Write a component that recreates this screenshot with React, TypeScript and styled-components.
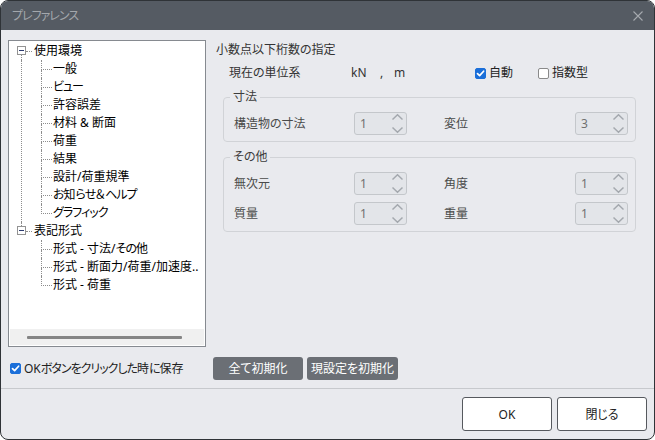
import * as React from "react";
import styled, { createGlobalStyle } from "styled-components";

const GlobalStyle = createGlobalStyle`
  html, body {
    margin: 0;
    padding: 0;
    background: #fff;
  }
  body {
    font-family: "Noto Sans", "Noto Sans CJK JP", sans-serif;
    font-size: 12px;
    font-feature-settings: "palt";
  }
  * {
    box-sizing: border-box;
  }
`;

const colors = {
  titleBar: "#555b63",
  titleText: "#a3a7ac",
  body: "#e9eaee",
  frame: "#2f3337",
  line: "#8d8d8d",
  text: "#222",
  label: "#4a4a4a",
  fieldBorder: "#d1d3d7",
  blue: "#1b6fd9",
  darkButton: "#6b6f75"
};

type TreeNode = { label: string; children: string[] };

const tree: TreeNode[] = [
  {
    label: "使用環境",
    children: [
      "一般",
      "ビュー",
      "許容誤差",
      "材料 & 断面",
      "荷重",
      "結果",
      "設計/荷重規準",
      "お知らせ＆ヘルプ",
      "グラフィック"
    ]
  },
  {
    label: "表記形式",
    children: ["形式 - 寸法/その他", "形式 - 断面力/荷重/加速度..", "形式 - 荷重"]
  }
];

// kana in the original UI font is narrower than in Noto, so tighten those runs
const KanaRun = styled.span`
  letter-spacing: -1px;
`;

const JP = ({ text }: { text: string }) => (
  <>
    {text.split(/([\u3040-\u30ff]+)/).map((part, i) =>
      /[\u3040-\u30ff]/.test(part) ? <KanaRun key={i}>{part}</KanaRun> : part
    )}
  </>
);

const Window = styled.div`
  width: 655px;
  height: 440px;
  border: 1px solid ${colors.frame};
  border-radius: 8px;
  overflow: hidden;
  background: ${colors.body};
  display: flex;
  flex-direction: column;
`;

const TitleBar = styled.div`
  height: 29px;
  flex: 0 0 auto;
  background: ${colors.titleBar};
  display: flex;
  align-items: center;
  justify-content: space-between;
  padding: 0 11px 0 11px;
`;

const Title = styled.div`
  color: ${colors.titleText};
  font-size: 12px;
  line-height: 16px;
  margin-top: 1px;
`;

const CloseIcon = styled.svg`
  display: block;
`;

const Body = styled.div`
  padding: 10px 7px 8px 7px;
  display: flex;
  flex-direction: column;
`;

const Upper = styled.div`
  display: flex;
  align-items: flex-start;
`;

const TreePanel = styled.div`
  width: 198px;
  height: 307px;
  flex: 0 0 auto;
  border: 1px solid #868a90;
  background: #fff;
  display: flex;
  flex-direction: column;
`;

const TreeItems = styled.div`
  flex: 1 1 auto;
  padding: 1px 0 0 8px;
  overflow: hidden;
`;

const ScrollTrack = styled.div`
  height: 16px;
  margin: 0 1px 1px 1px;
  background: #f0f0f0;
  display: flex;
  align-items: center;
  padding-left: 17px;
`;

const ScrollThumb = styled.div`
  width: 155px;
  height: 3px;
  border-radius: 1px;
  background: #858585;
`;

const Row = styled.div`
  height: 18px;
  display: flex;
  align-items: stretch;
  white-space: nowrap;
`;

const ExpandCol = styled.div`
  width: 9px;
  display: flex;
  flex-direction: column;
`;

const Segment = styled.div<{ $on: boolean; $grow?: boolean }>`
  margin-left: 4px;
  height: ${(p) => (p.$grow ? "auto" : "4px")};
  flex: ${(p) => (p.$grow ? "1 1 auto" : "0 0 auto")};
  border-left: 1px dotted ${(p) => (p.$on ? colors.line : "transparent")};
`;

const ExpandBox = styled.div`
  width: 9px;
  height: 9px;
  border: 1px solid #939393;
  background: #fff;
  display: flex;
  align-items: center;
  justify-content: center;
`;

const Minus = styled.div`
  width: 5px;
  height: 1px;
  background: #2c3a6e;
`;

const HDots = styled.div`
  width: 6px;
  margin-right: 2px;
  align-self: center;
  border-top: 1px dotted ${colors.line};
`;

const NodeLabel = styled.div<{ $child?: boolean }>`
  line-height: 18px;
  color: #000;
  margin-left: ${(p) => (p.$child ? "1px" : "0")};
`;

const ChildBlock = styled.div`
  display: flex;
`;

const Guide = styled.div<{ $on: boolean }>`
  width: 20px;
  margin-left: 4px;
  flex: 0 0 auto;
  border-left: 1px dotted ${(p) => (p.$on ? colors.line : "transparent")};
`;

const ChildList = styled.div`
  display: flex;
  flex-direction: column;
`;

const Connector = styled.div`
  width: 11px;
  flex: 0 0 auto;
  display: flex;
  flex-direction: column;
`;

const ConnTop = styled.div`
  height: 10px;
  border-left: 1px dotted ${colors.line};
  border-bottom: 1px dotted ${colors.line};
`;

const ConnBottom = styled.div<{ $last: boolean }>`
  flex: 1 1 auto;
  border-left: 1px dotted ${(p) => (p.$last ? "transparent" : colors.line)};
`;

const RightPanel = styled.div`
  flex: 1 1 auto;
  margin-left: 10px;
  color: ${colors.text};
`;

const Heading = styled.div`
  margin-top: 2px;
  line-height: 16px;
  color: #333;
`;

const UnitRow = styled.div`
  margin-top: 6px;
  padding-left: 13px;
  height: 18px;
  display: grid;
  grid-template-columns: 122px 29px 14px 81px 63px auto;
  align-items: center;
  color: #333;
  line-height: 18px;
`;

const CheckLabel = styled.label`
  display: flex;
  align-items: center;
  gap: 3px;
  color: #222;
  line-height: 18px;
`;

const CheckBox = styled.span<{ $checked: boolean }>`
  width: 11px;
  height: 11px;
  border-radius: 2px;
  flex: 0 0 auto;
  background: ${(p) => (p.$checked ? colors.blue : "#fff")};
  border: 1px solid ${(p) => (p.$checked ? colors.blue : "#8a8a8a")};
  display: flex;
  align-items: center;
  justify-content: center;
`;

const Group = styled.fieldset`
  margin: 7px 13px 0 7px;
  padding: 7px 7px 6px 10px;
  border: 1px solid ${colors.fieldBorder};
  border-radius: 4px;
  min-width: 0;
`;

const Legend = styled.legend`
  padding: 0 3px;
  margin-left: -4px;
  line-height: 16px;
  color: #3c3c3c;
`;

const FieldGrid = styled.div`
  display: grid;
  grid-template-columns: 120px 53px 37px 131px 53px;
  grid-auto-rows: 23px;
  row-gap: 7px;
  align-items: center;
`;

const FieldLabel = styled.div`
  color: ${colors.label};
  line-height: 16px;
`;

const SpinBox = styled.div`
  width: 53px;
  height: 23px;
  border: 1px solid #c4c7cb;
  border-radius: 3px;
  background: #e3e5e9;
  display: flex;
  align-items: center;
  justify-content: space-between;
  padding: 0 2px 0 5px;
`;

const SpinValue = styled.span`
  color: #707070;
  line-height: 16px;
`;

const Bottom = styled.div`
  margin-top: 10px;
  height: 23px;
  display: flex;
  align-items: center;
`;

const SaveOption = styled(CheckLabel)`
  width: 205px;
  padding-left: 2px;
  gap: 3px;
`;

const DarkButton = styled.button<{ $width: number }>`
  width: ${(p) => p.$width}px;
  height: 23px;
  margin-right: 4px;
  border: none;
  border-radius: 3px;
  background: ${colors.darkButton};
  color: #fff;
  font: inherit;
  font-size: 12px;
  padding: 0;
  line-height: 16px;
`;

const Separator = styled.div`
  height: 1px;
  flex: 0 0 auto;
  background: #c7c9cd;
`;

const Footer = styled.div`
  flex: 1 1 auto;
  display: flex;
  justify-content: flex-end;
  align-items: flex-start;
  gap: 5px;
  padding: 8px 7px 0 0;
`;

const DialogButton = styled.button`
  width: 90px;
  height: 34px;
  border: 1px solid #56595e;
  border-radius: 3px;
  background: #fff;
  color: #222;
  font: inherit;
  font-size: 12px;
  padding: 0;
`;

const Check = () => (
  <svg width="9" height="9" viewBox="0 0 9 9">
    <path
      d="M1.5 4.6 L3.6 6.6 L7.6 2.2"
      fill="none"
      stroke="#fff"
      strokeWidth="1.7"
      strokeLinecap="round"
      strokeLinejoin="round"
    />
  </svg>
);

const Chevrons = () => (
  <svg width="13" height="21" viewBox="0 0 13 21">
    <path
      d="M1.5 6.5 L6.5 1.8 L11.5 6.5 M1.5 14.5 L6.5 19.2 L11.5 14.5"
      fill="none"
      stroke="#a4a8ae"
      strokeWidth="1.5"
    />
  </svg>
);

const Spin = ({ value }: { value: string }) => (
  <SpinBox>
    <SpinValue>{value}</SpinValue>
    <Chevrons />
  </SpinBox>
);

const Tree = () => (
  <TreePanel>
    <TreeItems>
      {tree.map((node, gi) => {
        const hasNext = gi < tree.length - 1;
        return (
          <div key={node.label}>
            <Row>
              <ExpandCol>
                <Segment $on={gi > 0} />
                <ExpandBox>
                  <Minus />
                </ExpandBox>
                <Segment $on={hasNext} $grow />
              </ExpandCol>
              <HDots />
              <NodeLabel>
                <JP text={node.label} />
              </NodeLabel>
            </Row>
            <ChildBlock>
              <Guide $on={hasNext} />
              <ChildList>
                {node.children.map((c, ci) => (
                  <Row key={c}>
                    <Connector>
                      <ConnTop />
                      <ConnBottom $last={ci === node.children.length - 1} />
                    </Connector>
                    <NodeLabel $child>
                      <JP text={c} />
                    </NodeLabel>
                  </Row>
                ))}
              </ChildList>
            </ChildBlock>
          </div>
        );
      })}
    </TreeItems>
    <ScrollTrack>
      <ScrollThumb />
    </ScrollTrack>
  </TreePanel>
);

export default function App() {
  return (
    <>
      <GlobalStyle />
      <Window>
        <TitleBar>
          <Title>
            <JP text="プレファレンス" />
          </Title>
          <CloseIcon width="10" height="10" viewBox="0 0 10 10">
            <path d="M0.5 0.5 L9.5 9.5 M9.5 0.5 L0.5 9.5" stroke="#a5a9ae" strokeWidth="1.1" />
          </CloseIcon>
        </TitleBar>
        <Body>
          <Upper>
            <Tree />
            <RightPanel>
              <Heading>小数点以下桁数の指定</Heading>
              <UnitRow>
                <span>現在の単位系</span>
                <span>kN</span>
                <span>,</span>
                <span>m</span>
                <CheckLabel>
                  <CheckBox $checked>
                    <Check />
                  </CheckBox>
                  自動
                </CheckLabel>
                <CheckLabel>
                  <CheckBox $checked={false} />
                  指数型
                </CheckLabel>
              </UnitRow>
              <Group>
                <Legend>寸法</Legend>
                <FieldGrid>
                  <FieldLabel>構造物の寸法</FieldLabel>
                  <Spin value="1" />
                  <span />
                  <FieldLabel>変位</FieldLabel>
                  <Spin value="3" />
                </FieldGrid>
              </Group>
              <Group>
                <Legend>その他</Legend>
                <FieldGrid>
                  <FieldLabel>無次元</FieldLabel>
                  <Spin value="1" />
                  <span />
                  <FieldLabel>角度</FieldLabel>
                  <Spin value="1" />
                  <FieldLabel>質量</FieldLabel>
                  <Spin value="1" />
                  <span />
                  <FieldLabel>重量</FieldLabel>
                  <Spin value="1" />
                </FieldGrid>
              </Group>
            </RightPanel>
          </Upper>
          <Bottom>
            <SaveOption>
              <CheckBox $checked>
                <Check />
              </CheckBox>
              <span>
                <JP text="OKボタンをクリックした時に保存" />
              </span>
            </SaveOption>
            <DarkButton $width={90}>全て初期化</DarkButton>
            <DarkButton $width={91}>現設定を初期化</DarkButton>
          </Bottom>
        </Body>
        <Separator />
        <Footer>
          <DialogButton>OK</DialogButton>
          <DialogButton>閉じる</DialogButton>
        </Footer>
      </Window>
    </>
  );
}
